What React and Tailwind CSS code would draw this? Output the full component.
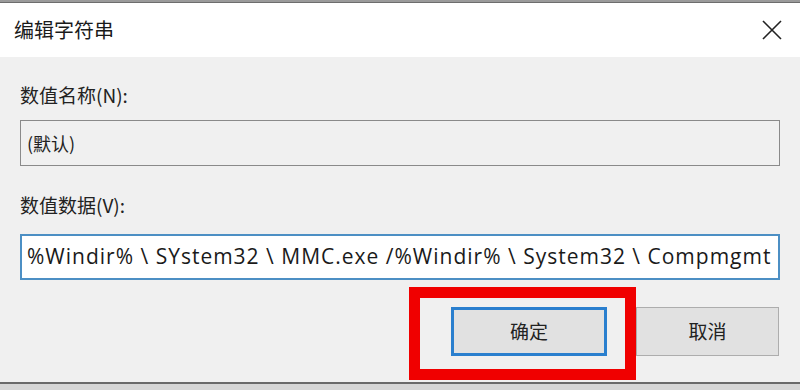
export default function App() {
  const cjk = { fontFamily: '"Noto Sans CJK SC", "Noto Sans", sans-serif' };
  const latin = { fontFamily: '"Open Sans", "Noto Sans CJK SC", sans-serif' };
  return (
    <div className="relative w-[800px] h-[390px] overflow-hidden bg-[#f0f0f0] flex flex-col" style={cjk}>
      {/* background window strip on top */}
      <div className="h-[3px] bg-[#9a9a9a] shrink-0 border-b border-[#6d6d6d]" />
      {/* title bar */}
      <div className="h-[54px] shrink-0 bg-white flex items-center justify-between pl-[14px] pr-[18px]">
        <span className="text-[20px] text-[#1a1a1a] leading-none">编辑字符串</span>
        <svg width="20" height="20" viewBox="0 0 20 20">
          <path d="M1 1 L19 19 M19 1 L1 19" stroke="#222" strokeWidth="1.6" fill="none" />
        </svg>
      </div>
      {/* body */}
      <div className="flex-1 flex flex-col px-[20px] pt-[27px]">
        <div className="text-[19px] leading-[22px] text-[#222]">数值名称(N):</div>
        <div className="mt-[14px] h-[46px] border border-[#8a8a8a] bg-[#f0f0f0] flex items-center pl-[6px] text-[18px] text-[#222]">
          (默认)
        </div>
        <div className="mt-[28px] text-[19px] leading-[22px] text-[#222]">数值数据(V):</div>
        <div className="mt-[18px] h-[46px] border-2 border-[#4c8fc4] bg-white flex items-center pl-[5px] overflow-hidden">
          <span className="whitespace-nowrap text-[21px] tracking-[1px] text-[#1a1a1a]" style={latin}>
            %Windir% \ SYstem32 \ MMC.exe /%Windir% \ System32 \ Compmgmt
          </span>
        </div>
        <div className="mt-[27px] flex justify-end gap-[29px]">
          <button className="w-[156px] h-[49px] border-[3px] border-[#2a7fce] bg-[#e1e1e1] text-[19px] text-[#222]">确定</button>
          <button className="w-[143px] h-[49px] border border-[#adadad] bg-[#e1e1e1] text-[19px] text-[#222] mr-[1px]">取消</button>
        </div>
      </div>
      {/* bottom background strip */}
      <div className="h-[8px] shrink-0 bg-[#d6d6d6] border-t-2 border-[#6a6a6a]" />
      {/* red highlight box */}
      <div className="absolute left-[409px] top-[287px] w-[227px] h-[93px] border-[11px] border-[#f00000]" />
    </div>
  );
}
